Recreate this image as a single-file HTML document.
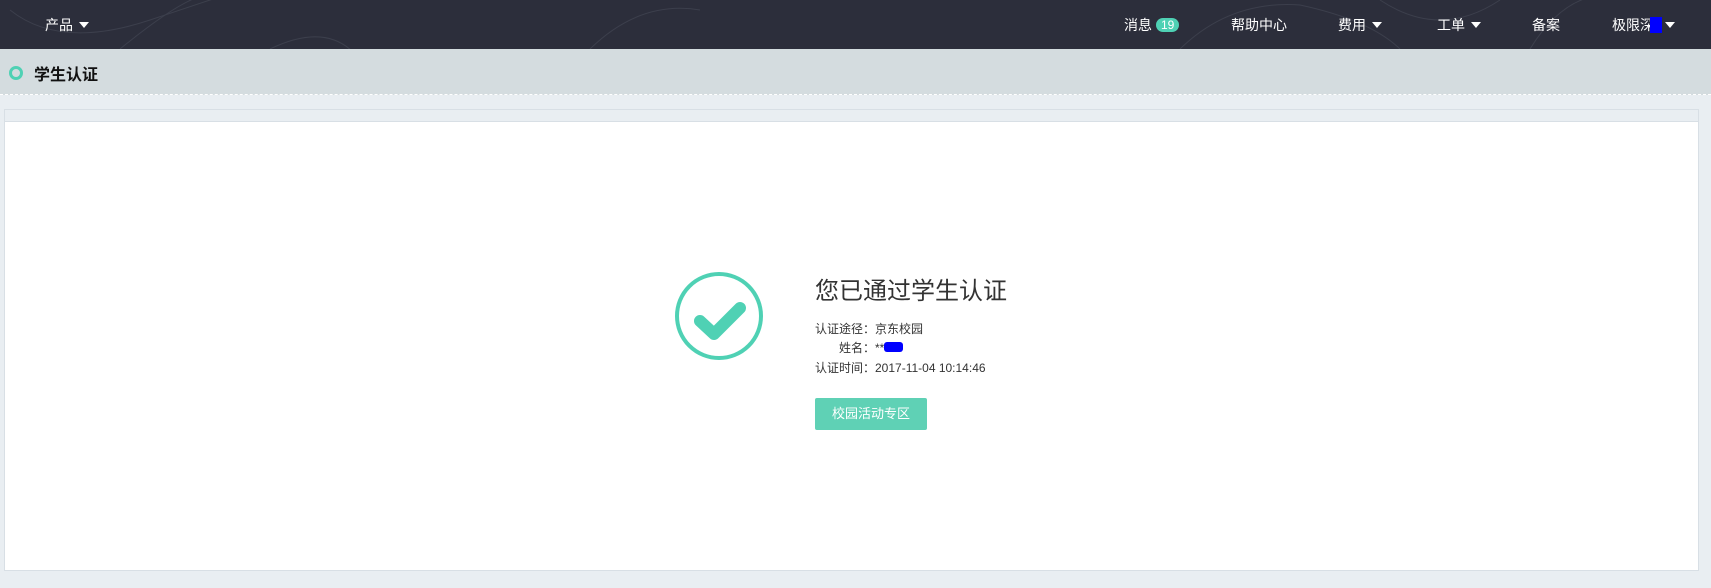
<!DOCTYPE html>
<html><head><meta charset="utf-8"><style>
*{margin:0;padding:0;box-sizing:border-box}
body{width:1711px;height:588px;background:#e9eef2;font-family:"Liberation Sans","Noto Sans CJK SC",sans-serif;position:relative;overflow:hidden}
.nav{position:absolute;left:0;top:0;width:1711px;height:49px;background:#2c2e3b;color:#fff;font-size:14px}
.nav span{position:absolute;top:17px;line-height:16px;white-space:nowrap}
.tri{display:inline-block;width:0;height:0;border-left:5px solid transparent;border-right:5px solid transparent;border-top:6px solid #fff;margin-left:6px;vertical-align:2px}
.badge{display:inline-block;background:#4fd1b4;border-radius:8px;padding:0 5px;font-size:12px;line-height:14px;margin-left:4px;vertical-align:1px;font-style:normal}
.sub{position:absolute;left:0;top:49px;width:1711px;height:46px;background:#d4dcdf;border-bottom:1px dashed #fff}
.sub .ic{position:absolute;left:9px;top:17px;width:14px;height:14px;border:3px solid #4fd1b4;border-radius:50%}
.sub .t{position:absolute;left:34px;top:12px;font-size:16px;font-weight:bold;color:#111}
.panel{position:absolute;left:4px;top:109px;width:1695px;height:462px;border:1px solid #d8dfe5;background:#e9eef2}
.inner{position:absolute;left:0;top:11px;right:0;bottom:0;background:#fff;border-top:1px solid #d8dfe5}
.h{position:absolute;left:815px;top:271px;font-size:24px;color:#333}
.l{position:absolute;font-size:12px;color:#333;line-height:14px}
.btn{position:absolute;left:815px;top:398px;width:112px;height:32px;background:#5fd1b5;border-radius:2px;color:#fff;font-size:13px;text-align:center;line-height:32px}
</style></head><body>
<div class="nav">
<svg width="1711" height="49" style="position:absolute;left:0;top:0" fill="none" stroke="#3c3f4c" stroke-width="1"><path d="M10 10 Q60 50 150 20 T240 -10"/><path d="M120 49 Q180 0 205 -5"/><path d="M270 49 Q330 20 360 60"/><path d="M590 49 Q640 0 700 10"/><path d="M1180 49 Q1230 0 1300 5 Q1370 20 1400 49"/><path d="M1380 0 Q1440 40 1500 0"/><path d="M1530 49 Q1560 0 1600 -5"/></svg>
<span style="left:45px">产品<i class="tri"></i></span>
<span style="left:1124px">消息<i class="badge">19</i></span>
<span style="left:1231px">帮助中心</span>
<span style="left:1338px">费用<i class="tri"></i></span>
<span style="left:1437px">工单<i class="tri"></i></span>
<span style="left:1532px">备案</span>
<span style="left:1612px">极限深<b style="display:inline-block;width:12px;height:16px;background:#00f;vertical-align:-3px;margin-left:-4px"></b><i class="tri" style="margin-left:3px"></i></span>
</div>
<div class="sub"><div class="ic"></div><div class="t">学生认证</div></div>
<div class="panel"><div class="inner"></div></div>
<svg width="100" height="100" style="position:absolute;left:669px;top:266px" fill="none" stroke="#4fd1b4"><circle cx="50" cy="50" r="42" stroke-width="4"/><path d="M31 55 L45 68 L71 42" stroke-width="12" stroke-linecap="round" stroke-linejoin="round"/></svg>
<div class="h">您已通过学生认证</div>
<div class="l" style="left:815px;top:322px">认证途径：京东校园</div>
<div class="l" style="left:839px;top:341px">姓名：**<b style="display:inline-block;width:19px;height:10px;background:#00f;border-radius:3px;vertical-align:0"></b></div>
<div class="l" style="left:815px;top:361px">认证时间：2017-11-04 10:14:46</div>
<div class="btn">校园活动专区</div>
</body></html>
